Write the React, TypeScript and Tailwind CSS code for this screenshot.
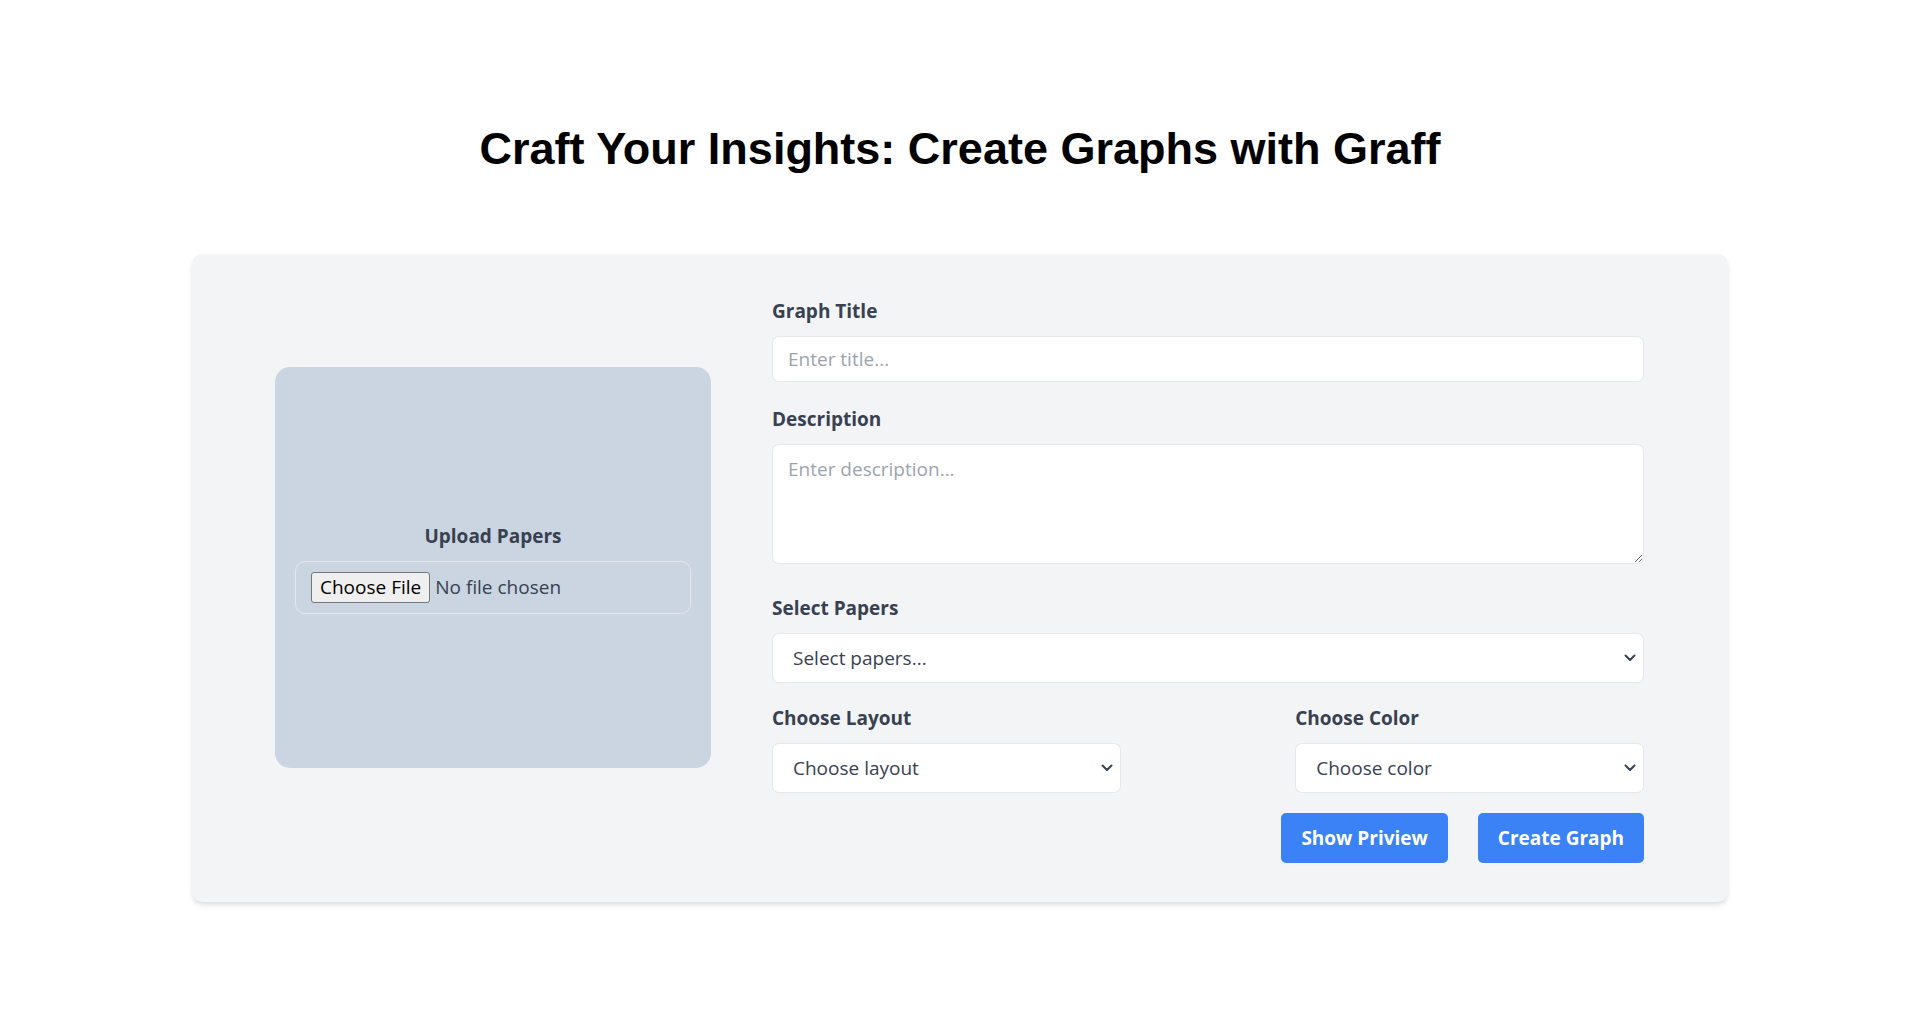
import React from 'react';

const body = "font-['Open_Sans','Noto_Sans',sans-serif]";

function Chevron() {
  return (
    <svg
      width="12"
      height="8"
      viewBox="0 0 12 8"
      className="pointer-events-none absolute right-[8px] top-1/2 -translate-y-1/2"
      aria-hidden
    >
      <path d="M1.5 1.5 6 6l4.5-4.5" fill="none" stroke="#374151" strokeWidth="2" strokeLinecap="round" strokeLinejoin="round" />
    </svg>
  );
}

function Select({ placeholder }: { placeholder: string }) {
  return (
    <div className="relative w-full">
      <select
        defaultValue=""
        className="h-[50px] w-full appearance-none rounded-[7px] border border-[#e5e7eb] bg-white pl-[20px] pr-[30px] text-[19px] text-[#374151] outline-none"
      >
        <option value="" disabled>
          {placeholder}
        </option>
      </select>
      <Chevron />
    </div>
  );
}

function Label({ children, className = '' }: { children: React.ReactNode; className?: string }) {
  return (
    <label className={`mb-[10px] block text-[19px] leading-[30px] font-bold text-[#374151] ${className}`}>
      {children}
    </label>
  );
}

export default function App() {
  return (
    <div className={`min-h-screen bg-white ${body}`}>
      <h1 className="pt-[124px] mb-[80px] text-center font-['Liberation_Sans',Arial,sans-serif] text-[45px] leading-[50px] font-bold text-black">
        Craft Your Insights: Create Graphs with Graff
      </h1>

      <div className="mx-auto flex w-[1536px] gap-[61px] rounded-[10px] bg-[#f3f4f6] pt-[42px] pb-[39px] pl-[83px] pr-[84px] shadow-[0_4px_6px_-1px_rgba(0,0,0,0.1),0_2px_4px_-2px_rgba(0,0,0,0.1)]">
        {/* upload panel */}
        <div className="mt-[71px] flex h-[401px] w-[436px] shrink-0 flex-col items-center justify-center self-start rounded-[15px] bg-[#cbd5e1] p-5">
          <Label className="text-center">Upload Papers</Label>
          <div className="flex h-[53px] w-full items-center rounded-[10px] border border-[#e5e7eb] px-[15px]">
            <span className="rounded-[3px] border border-[#767676] bg-[#efefef] px-[8px] text-[19px] leading-[29px] text-black">
              Choose File
            </span>
            <span className="ml-[5px] text-[19px] text-[#374151]">No file chosen</span>
          </div>
        </div>

        {/* form */}
        <form className="flex flex-1 flex-col" onSubmit={(e) => e.preventDefault()}>
          <Label>Graph Title</Label>
          <input
            type="text"
            placeholder="Enter title..."
            className="h-[46px] w-full rounded-[7px] border border-[#e5e7eb] bg-white px-[15px] text-[19px] text-[#374151] outline-none placeholder:text-[#9ca3af]"
          />

          <Label className="mt-[22px]">Description</Label>
          <textarea
            placeholder="Enter description..."
            className="block h-[120px] w-full rounded-[7px] border border-[#e5e7eb] bg-white px-[15px] py-[9px] text-[19px] leading-[30px] text-[#374151] outline-none placeholder:text-[#9ca3af]"
          />

          <Label className="mt-[29px]">Select Papers</Label>
          <Select placeholder="Select papers..." />

          <div className="mt-[20px] flex justify-between">
            <div className="w-2/5">
              <Label>Choose Layout</Label>
              <Select placeholder="Choose layout" />
            </div>
            <div className="w-2/5">
              <Label>Choose Color</Label>
              <Select placeholder="Choose color" />
            </div>
          </div>

          <div className="mt-[20px] flex justify-end gap-[30px]">
            <button type="button" className="h-[50px] rounded-[5px] bg-[#3b82f6] px-[20px] text-[19px] font-bold text-white">
              Show Priview
            </button>
            <button type="submit" className="h-[50px] rounded-[5px] bg-[#3b82f6] px-[20px] text-[19px] font-bold text-white">
              Create Graph
            </button>
          </div>
        </form>
      </div>
    </div>
  );
}
